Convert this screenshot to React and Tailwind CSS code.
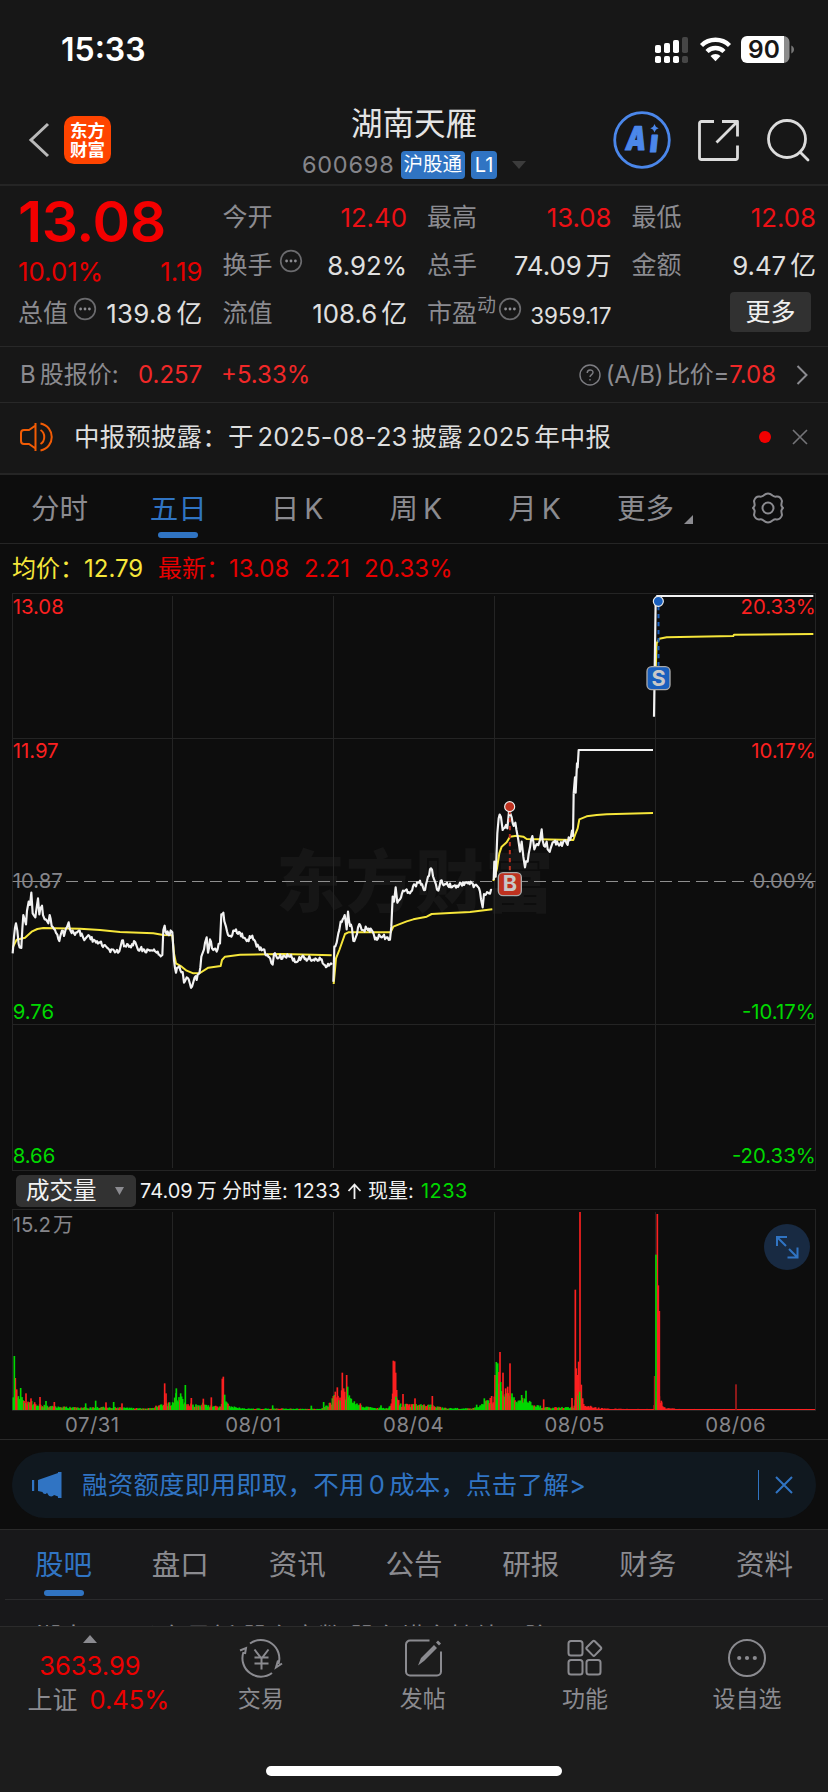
import React, { useState } from "react";

// chart coordinates are 3 units per css pixel
const PRICE_DAYS = [
  {
    amp: 9,
    points: "38,1120 42,1070 48,1030 52,1052 56,1092 64,1104 70,1005 78,1033 86,965 90,975 94,938 98,1000 106,1012 114,955 118,1003 126,977 134,1018 145,1030 149,1005 155,1038 165,1050 172,1064 178,1083 186,1052 192,1068 198,1045 206,1027 212,1053 222,1060 236,1052 250,1074 262,1069 272,1078 285,1082 300,1088 312,1096 325,1106 345,1117 358,1114 366,1082 378,1100 390,1098 406,1087 412,1104 430,1108 450,1112 470,1118 487,1125 490,1050 494,1037 500,1062 517,1057 522,1140 528,1178 535,1162 548,1176 552,1208 560,1192 570,1212 576,1220 584,1192 590,1200 598,1180 604,1130 612,1108 620,1072 624,1118 630,1078 640,1110 650,1115 660,1090 664,1003 670,998 678,1040 684,1065 694,1070 705,1053 720,1058 740,1083 757,1067 770,1100 790,1108 805,1130 818,1154 822,1122 832,1135 850,1127 870,1130 892,1145 905,1132 925,1136 950,1138 965,1138 972,1154 996,1154",
  },
  {
    amp: 9,
    points: "1000,1205 1003,1100 1010,1088 1015,1060 1022,1025 1034,1005 1040,1048 1044,995 1050,1038 1056,1045 1060,1083 1068,1070 1078,1032 1085,1050 1100,1045 1115,1050 1125,1078 1140,1068 1160,1072 1170,1079 1174,1040 1178,950 1182,965 1187,922 1192,968 1200,958 1206,940 1220,928 1230,940 1245,915 1260,902 1275,930 1284,890 1293,865 1305,905 1315,932 1322,902 1335,912 1365,916 1400,907 1425,915 1440,935 1448,982 1452,942 1464,938 1476,930",
  },
  {
    amp: 12,
    points: "1481,900 1483,845 1487,890 1492,760 1496,715 1503,712 1508,750 1518,735 1522,745 1527,695 1535,712 1541,738 1546,728 1555,780 1560,815 1565,785 1570,830 1575,862 1583,845 1590,802 1597,768 1603,808 1612,792 1620,780 1625,748 1632,798 1640,785 1646,812 1655,796 1665,782 1680,794 1690,785 1700,790 1712,775 1716,752 1719,768 1721,640",
  },
  { amp: 0, points: "1721,640 1725,592 1727,638 1731,550 1733,562 1736,510 1959,510" },
  { amp: 0, points: "1962,410 1967,62 1971,48 2440,48" },
];

const AVERAGE_DAYS = [
  "38,1103 50,1079 75,1073 95,1055 112,1047 130,1044 240,1046 300,1050 360,1056 460,1060 490,1065 517,1066 522,1120 528,1150 545,1160 560,1172 580,1180 600,1179 625,1163 662,1158 666,1140 675,1130 720,1124 850,1122 995,1126",
  "1001,1212 1008,1135 1018,1110 1035,1062 1045,1057 1172,1057 1180,1040 1195,1034 1220,1024 1240,1018 1280,1010 1295,1002 1350,999 1410,996 1477,988",
  "1480,903 1490,870 1498,820 1505,800 1520,787 1530,770 1550,767 1570,770 1580,777 1720,780 1725,765 1733,745 1738,718 1760,709 1790,705 1820,703 1959,699",
  "1965,330 1970,190 1978,176 2000,172 2200,168 2202,164 2440,162",
];

const random = (n) => {
  const v = Math.sin(n * 127.1 + 11.7) * 43758.5453;
  return v - Math.floor(v);
};

const wiggle = (text, amp) => {
  if (!amp) return text;
  const pts = text.split(" ").map((p) => p.split(",").map(Number));
  const out = [];
  pts.forEach(([x, y], i) => {
    out.push(`${x},${y}`);
    const next = pts[i + 1];
    if (!next) return;
    const steps = Math.floor((next[0] - x) / 3);
    for (let s = 1; s < steps; s++) {
      const t = s / steps;
      const noise = (random(x + s * 3) - 0.5) * amp * 1.8;
      out.push(`${x + s * 3},${(y + (next[1] - y) * t + noise).toFixed(1)}`);
    }
  });
  return out.join(" ");
};

// [x, typical height, share of red bars]
const VOLUME_LEVELS = [
  [40, 62, 0.2], [60, 50, 0.2], [75, 35, 0.4], [95, 26, 0.3], [130, 16, 0.2], [160, 13, 0.3], [210, 9, 0.3],
  [250, 8, 0.2], [330, 10, 0.2], [380, 7, 0.2], [450, 6, 0.3], [470, 14, 0.4], [515, 26, 0.4], [528, 58, 0.1],
  [545, 40, 0.1], [555, 20, 0.5], [585, 18, 0.3], [610, 22, 0.6], [635, 14, 0.5], [662, 12, 0.6], [672, 46, 0.1], [688, 14, 0.1],
  [730, 5, 0.3], [960, 4, 0.3], [985, 16, 0.6], [1005, 50, 0.7], [1025, 60, 0.6], [1045, 45, 0.3], [1065, 24, 0.1],
  [1090, 12, 0.3], [1120, 8, 0.2], [1165, 6, 0.4], [1178, 50, 0.9], [1190, 36, 0.6], [1205, 18, 0.4], [1245, 18, 0.5], [1300, 16, 0.3],
  [1330, 7, 0.1], [1410, 5, 0.2], [1450, 22, 0.2], [1480, 40, 0.5], [1490, 90, 0.4], [1510, 60, 0.5], [1530, 46, 0.3], [1555, 34, 0.1],
  [1580, 38, 0.1], [1600, 16, 0.2], [1650, 8, 0.3], [1720, 10, 0.5], [1728, 50, 0.7], [1745, 40, 0.9], [1760, 16, 1], [1790, 8, 1],
  [1830, 4, 1], [1960, 3, 1], [1972, 60, 1], [1982, 30, 1], [1996, 6, 1], [2050, 3, 1], [2446, 3, 1],
];

// [x, height, "r" | "g" | "d"]
const VOLUME_SPIKES = [
  [46, 96, "r"], [50, 62, "r"], [43, 162, "g"], [62, 66, "g"], [78, 50, "r"], [93, 35, "r"], [120, 39, "r"], [138, 27, "g"],
  [163, 24, "r"], [257, 20, "g"], [287, 28, "g"], [318, 23, "r"], [341, 24, "g"], [366, 20, "r"], [494, 80, "r"], [498, 50, "r"],
  [529, 65, "g"], [542, 50, "g"], [556, 75, "g"], [574, 36, "r"], [610, 34, "r"], [634, 38, "r"], [667, 94, "r"], [670, 100, "r"],
  [674, 46, "g"], [818, 14, "g"], [934, 13, "g"], [971, 24, "g"], [990, 22, "r"], [1006, 55, "r"], [1012, 68, "r"], [1027, 112, "r"],
  [1031, 65, "r"], [1040, 105, "r"], [1043, 70, "g"], [1081, 20, "r"], [1143, 14, "g"], [1180, 148, "r"], [1184, 146, "r"], [1187, 112, "r"],
  [1190, 60, "r"], [1188, 40, "g"], [1209, 48, "r"], [1245, 35, "r"], [1297, 42, "r"], [1430, 16, "g"], [1453, 35, "g"], [1475, 42, "r"],
  [1485, 105, "r"], [1489, 144, "g"], [1493, 140, "g"], [1497, 114, "r"], [1500, 174, "r"], [1502, 84, "g"], [1509, 112, "r"], [1517, 65, "r"],
  [1523, 70, "r"], [1530, 140, "r"], [1536, 50, "g"], [1565, 45, "g"], [1578, 58, "g"], [1631, 32, "r"], [1716, 36, "r"], [1726, 361, "r"],
  [1729, 125, "r"], [1732, 105, "r"], [1734, 44, "g"], [1736, 145, "r"], [1740, 594, "r"], [1744, 76, "r"], [1739, 55, "g"], [1568, 20, "g"],
  [1964, 102, "d"], [1972, 588, "r"], [1975, 374, "r"], [1978, 297, "r"], [1968, 466, "g"], [1984, 28, "r"], [2208, 77, "d"],
];

const volumeBars = () => {
  const bars = [];
  for (let i = 0; i < VOLUME_LEVELS.length - 1; i++) {
    const [x0, h0, red] = VOLUME_LEVELS[i];
    const [x1, h1] = VOLUME_LEVELS[i + 1];
    for (let x = x0; x < x1; x += 3) {
      const level = h0 + ((h1 - h0) * (x - x0)) / (x1 - x0);
      const h = Math.max(3, level * (0.45 + random(x) * 0.6));
      bars.push([x, h, random(x * 3.7) < red ? "r" : "g"]);
    }
  }
  return [...bars, ...VOLUME_SPIKES];
};

const BAR_COLORS = { r: "#fb2020", g: "#00d800", d: "#a81c1c" };
const GRID_X = [517.5, 1000.5, 1483.5, 1966.5];

const DotsIcon = ({ className }) => (
  <svg className={className} viewBox="0 0 24 24" width="24" height="24" fill="none" stroke="#6b6b6e" strokeWidth="1.7">
    <circle cx="12" cy="12" r="10.3" />
    <g fill="#8d8d92" stroke="none">
      <circle cx="7.6" cy="12" r="1.4" />
      <circle cx="12" cy="12" r="1.4" />
      <circle cx="16.4" cy="12" r="1.4" />
    </g>
  </svg>
);

const StatusBar = () => (
  <div className="flex h-[100px] items-center justify-between pl-[61px] pr-[33px]">
    <span className="text-[32px] font-semibold text-white">15:33</span>
    <svg width="140" height="30" viewBox="0 0 140 30" fill="#fff">
      <g>
        <rect x="0" y="10" width="6" height="8" rx="1.8" />
        <rect x="9" y="8" width="6" height="10" rx="1.8" />
        <rect x="18" y="5" width="6" height="13" rx="1.8" />
        <rect x="27" y="2" width="6" height="16" rx="1.8" fill="#464646" />
        <rect x="0" y="21" width="6" height="7" rx="1.8" />
        <rect x="9" y="21" width="6" height="7" rx="1.8" />
        <rect x="18" y="21" width="6" height="7" rx="1.8" />
        <rect x="27" y="21" width="6" height="7" rx="1.8" fill="#464646" />
      </g>
      <g fill="none" stroke="#fff" strokeWidth="4.4">
        <path d="M46.5 10.5a20 20 0 0 1 28 0" />
        <path d="M52 16.5a12.2 12.2 0 0 1 17 0" />
      </g>
      <path d="M60.5 26.3l-5-5.2a7.2 7.2 0 0 1 10 0z" />
      <path d="M127 1h1.5a6 6 0 0 1 6 6v15a6 6 0 0 1-6 6H127z" fill="#8b8b8b" />
      <path d="M92 1h37v27H92a6 6 0 0 1-6-6V7a6 6 0 0 1 6-6z" />
      <path d="M136.3 10.5c3.6 1.4 3.6 6.6 0 8z" fill="#777" />
      <text x="109" y="23" textAnchor="middle" fontSize="24.5" fontWeight="600" fill="#171717">90</text>
    </svg>
  </div>
);

const Header = () => (
  <header className="flex h-[84px] justify-between">
    <div className="flex h-20 w-[230px] items-center pl-[28px]">
      <svg width="22" height="36" viewBox="0 0 22 36" fill="none" stroke="#b9b9b9" strokeWidth="3">
        <path d="M20 2L3 18l17 16" />
      </svg>
      <div className="ml-[14px] flex h-12 w-[47px] flex-col items-center justify-center rounded-[10px] bg-[#ff4400] text-[17.5px] font-bold leading-[19px] text-white">
        <span>东方</span>
        <span>财富</span>
      </div>
    </div>
    <div className="flex flex-col items-center">
      <h1 className="mt-[5px] text-[31.5px] leading-[38px] text-[#e4e4e4]">湖南天雁</h1>
      <div className="mt-[8px] flex h-7 items-center">
        <span className="text-[23.5px] tracking-[0.8px] text-[#85858a]">600698</span>
        <span className="ml-[6px] flex h-7 items-center rounded-[4px] bg-[#3074c3] px-[3px] text-[19.5px] text-white">沪股通</span>
        <span className="ml-[6px] flex h-7 w-[26px] items-center justify-center rounded-[4px] bg-[#3074c3] text-[20px] text-white">L1</span>
        <svg className="ml-[15px]" width="14" height="8" viewBox="0 0 14 8"><path d="M0 0h14L7 8z" fill="#3c3c3c" /></svg>
      </div>
    </div>
    <div className="flex h-20 w-[230px] items-center justify-end pr-[18px]">
      <svg width="58" height="58" viewBox="0 0 58 58">
        <circle cx="29" cy="29" r="27.3" fill="none" stroke="#4b87ea" strokeWidth="2.8" />
        <g fontSize="32.5" fontWeight="900" fill="#4b87ea" stroke="#4b87ea" strokeWidth="1.2" strokeLinejoin="round">
          <text transform="translate(11.5 39) skewX(-9) scale(.78 1)">A</text>
          <text transform="translate(36 40.5) skewX(-6) scale(.85 .95)">ı</text>
        </g>
        <path d="M41.5 13c1 2.5 1.5 3.2 4.2 4.3-2.7 1-3.2 1.7-4.2 4.2-1-2.5-1.5-3.2-4.2-4.2 2.7-1.1 3.2-1.8 4.2-4.3z" fill="#4b87ea" />
      </svg>
      <svg className="ml-[26px]" width="42" height="42" viewBox="0 0 42 42" fill="none" stroke="#dcdcdc" strokeWidth="2.8">
        <path d="M17 2.5H4.5a2 2 0 0 0-2 2v34a2 2 0 0 0 2 2h34a2 2 0 0 0 2-2V26.5M25 2.5h15.5v15M40 3L19.5 23.5" strokeLinejoin="round" />
      </svg>
      <svg className="ml-[27px]" width="44" height="44" viewBox="0 0 44 44" fill="none" stroke="#dcdcdc" strokeWidth="2.8" strokeLinecap="round">
        <circle cx="21" cy="21" r="18.5" />
        <path d="M34 34l8 8" />
      </svg>
    </div>
  </header>
);

const Cell = ({ label, value, red, dots }) => (
  <div className="flex h-12 items-center justify-between">
    <span className="flex items-center text-[25px] text-[#8b8b90]">
      {label}
      {dots && <DotsIcon className="mb-[10px] ml-[6px]" />}
    </span>
    <span className={red ? "text-[25.8px] text-[#ec1015]" : "text-[25.8px] text-[#e0e0e0]"}>{value}</span>
  </div>
);

const Quote = () => (
  <section className="grid h-[162px] grid-cols-4 gap-x-5 border-t-2 border-[#252525] pl-[18px] pr-[12px] pt-2">
    <div className="-mt-px">
      <div className="flex h-14 items-center text-[57px] font-semibold leading-none tracking-[-0.4px] text-[#f30000]">13.08</div>
      <div className="flex h-[46px] items-center justify-between text-[25.8px] text-[#e60000]">
        <span>10.01%</span>
        <span>1.19</span>
      </div>
      <div className="flex h-[38px] items-center justify-between">
        <span className="flex items-center text-[25px] text-[#8b8b90]">总值<DotsIcon className="mb-[10px] ml-[5px]" /></span>
        <span className="text-[25.8px] tracking-[0.3px] text-[#e0e0e0]">139.8<span className="ml-1">亿</span></span>
      </div>
    </div>
    <div>
      <Cell label="今开" value="12.40" red />
      <Cell label="换手" value="8.92%" dots />
      <Cell label="流值" value={<>108.6<span className="ml-1">亿</span></>} />
    </div>
    <div>
      <Cell label="最高" value="13.08" red />
      <Cell label="总手" value={<>74.09<span className="ml-1">万</span></>} />
      <div className="flex h-12 items-center justify-between">
        <span className="flex items-center text-[25px] text-[#8b8b90]">
          市盈<span className="mb-[16px] text-[19px]">动</span>
          <DotsIcon className="mb-[10px] ml-[2px]" />
        </span>
        <span className="pt-1 text-[22.5px] text-[#e0e0e0]">3959.17</span>
      </div>
    </div>
    <div>
      <Cell label="最低" value="12.08" red />
      <Cell label="金额" value={<>9.47<span className="ml-1">亿</span></>} />
      <div className="flex justify-end pr-[5px] pt-[2px]">
        <button className="h-10 w-[81px] rounded-[4px] bg-[#313131] text-[25px] leading-none text-[#f0f0f0]">更多</button>
      </div>
    </div>
  </section>
);

const BShareRow = () => (
  <section className="flex h-[56px] items-center border-t border-[#282828] pl-[20px] pr-[20px] text-[24px] text-[#8b8b90]">
    <span className="w-[118px]">B<span className="ml-1">股报价:</span></span>
    <span className="w-[83px] text-[#f02828]">0.257</span>
    <span className="text-[#f02828]">+5.33%</span>
    <svg className="ml-auto" width="22" height="22" viewBox="0 0 22 22" fill="none" stroke="#7d7d82" strokeWidth="1.4">
      <circle cx="11" cy="11" r="10" />
      <path d="M8.2 9c0-4 5.800-4 5.800-.5 0 2-3 2.300-3 4.600M11 15v1.600" />
    </svg>
    <span className="ml-[5px] tracking-[-0.3px]">(A/B)<span className="ml-[3px]">比价=</span></span>
    <span className="text-[#f02828]">7.08</span>
    <svg className="ml-[20px]" width="12" height="20" viewBox="0 0 12 20" fill="none" stroke="#8b8b90" strokeWidth="2">
      <path d="M1.5 1l9 9-9 9" />
    </svg>
  </section>
);

const NewsRow = () => (
  <section className="flex h-[71px] items-center border-t border-[#282828] pb-0.5 pl-5 pr-[20px]">
    <svg width="34" height="30" viewBox="0 0 34 30" fill="none" stroke="#f25c05" strokeWidth="2">
      <path d="M15.5 1v28M15.5 3.500L9 8H4a3 3 0 0 0-3 3v8a3 3 0 0 0 3 3h5l6.500 4.500" />
      <path d="M20.5 8c5 3 5 11 0 14M20.5 1.500c15 3 15 24 0 27" />
    </svg>
    <p className="ml-[20px] whitespace-nowrap text-[25.5px] tracking-[0.15px] text-[#dedede]">
      中报预披露：于<span className="mx-1">2025-08-23</span>披露<span className="mx-1">2025</span>年中报
    </p>
    <span className="ml-auto h-3 w-3 rounded-full bg-[#f30000]" />
    <svg className="ml-[21px]" width="16" height="16" viewBox="0 0 16 16" stroke="#747478" strokeWidth="1.6">
      <path d="M1 1l14 14M15 1L1 15" />
    </svg>
  </section>
);

const ChartTabs = () => {
  const [active, setActive] = useState(1);
  const tabs = [["分时"], ["五日"], ["日", "K"], ["周", "K"], ["月", "K"]];
  return (
    <nav className="flex h-[70px] border-t-2 border-[#252525] bg-[#0d0d0d] text-[28.5px] text-[#8b8b90]">
      {tabs.map(([name, suffix], i) => (
        <button key={name} onClick={() => setActive(i)} className={i === active ? "relative w-[118.8px] text-[#3074c3]" : "relative w-[118.8px]"}>
          {name}
          {suffix && <span className="ml-[5px]">{suffix}</span>}
          {i === active && <span className="absolute bottom-[5px] left-[39px] h-[6px] w-10 rounded-[3px] bg-[#3074c3]" />}
        </button>
      ))}
      <button className="ml-[23px] flex items-center">
        更多
        <svg className="ml-[10px] mt-[20px]" width="9" height="9" viewBox="0 0 9 9"><path d="M9 0v9H0z" fill="#8b8b90" /></svg>
      </button>
      <svg className="ml-[58px] mt-[16px]" width="34" height="34" viewBox="0 0 34 34" fill="none" stroke="#8b8b90" strokeWidth="2" strokeLinejoin="round">
        <path d="M12.5 4.500Q17 .5 21.500 4.500Q23.500 6 25.500 5.600Q29.500 5.200 31 10Q30.500 12.200 30.300 14Q30.500 15.500 32 17Q30.500 18.500 30.300 20Q30.500 21.800 31 24Q29.500 28.800 25.500 28.400Q23.500 28 21.500 29.500Q17 33.500 12.500 29.500Q10.500 28 8.500 28.400Q4.500 28.800 3 24Q3.500 21.800 3.700 20Q3.500 18.500 2 17Q3.500 15.500 3.700 14Q3.500 12.200 3 10Q4.500 5.200 8.500 5.600Q10.500 6 12.500 4.500z" />
        <circle cx="17" cy="17" r="5.5" />
      </svg>
    </nav>
  );
};

const PriceChart = () => (
  <svg className="block" width="828" height="582" viewBox="0 33 2484 1746" fontSize="61">
    <text x="828" y="982" fontSize="206" fontWeight="900" letterSpacing="3" fill="#161616">东方财富</text>
    <g fill="none" stroke="#242424" strokeWidth="3">
      <rect x="37.5" y="40.5" width="2409" height="1731" />
      <path d="M37 475.5H2446M37 1333.5H2446" />
      {GRID_X.map((x) => <path key={x} d={`M${x} 48V1764`} />)}
    </g>
    <path d="M198 904.5H2446" stroke="#8f8f8f" strokeWidth="3" strokeDasharray="36 18" />
    <path d="M38 904.5H180M2250 904.5H2446" stroke="#8f8f8f" strokeWidth="3" />
    <g fill="none" stroke="#f6e63a" strokeWidth="6" strokeLinejoin="round">
      {AVERAGE_DAYS.map((points) => <polyline key={points} points={points} />)}
    </g>
    <g fill="none" stroke="#f2f2f2" strokeWidth="6.5" strokeLinejoin="round">
      {PRICE_DAYS.map(({ points, amp }) => <polyline key={points} points={wiggle(points, amp)} />)}
    </g>
    <path d="M1529.5 690V880" stroke="#bf3220" strokeWidth="6" strokeDasharray="13 11" />
    <circle cx="1529" cy="680" r="15" fill="#bf3220" stroke="#eee" strokeWidth="3.5" />
    <rect x="1495" y="878" width="69" height="69" rx="14" fill="#bf3220" stroke="#a9a9a9" strokeWidth="4" />
    <text x="1529.5" y="934" textAnchor="middle" fontWeight="700" fontSize="65" fill="#c8c8c8">B</text>
    <path d="M1975.5 78V262" stroke="#195fbd" strokeWidth="6" strokeDasharray="13 11" />
    <circle cx="1975" cy="64" r="15" fill="#195fbd" stroke="#eee" strokeWidth="3.5" />
    <rect x="1941" y="260" width="69" height="69" rx="14" fill="#195fbd" stroke="#a9a9a9" strokeWidth="4" />
    <text x="1975.5" y="318" textAnchor="middle" fontWeight="700" fontSize="65" fill="#c8c8c8">S</text>
    <g fill="#fb2020">
      <text x="38" y="102">13.08</text>
      <text x="38" y="534">11.97</text>
      <text x="2447" y="102" textAnchor="end">20.33%</text>
      <text x="2447" y="534" textAnchor="end">10.17%</text>
    </g>
    <g fill="#85858a">
      <text x="38" y="924">10.87</text>
      <text x="2447" y="924" textAnchor="end">0.00%</text>
    </g>
    <g fill="#00d800">
      <text x="38" y="1317">9.76</text>
      <text x="38" y="1749">8.66</text>
      <text x="2447" y="1317" textAnchor="end">-10.17%</text>
      <text x="2447" y="1749" textAnchor="end">-20.33%</text>
    </g>
  </svg>
);

const VolumeLegend = () => (
  <div className="flex h-[35px] items-center whitespace-nowrap pl-4 text-[20px] text-[#f2f2f2]">
    <button className="flex h-8 w-[120px] items-center justify-between rounded-[5px] bg-[#323232] pl-[10px] pr-[12px] text-[23.5px]">
      成交量
      <svg width="9" height="8" viewBox="0 0 9 8"><path d="M0 0h9L4.500 8z" fill="#8b8b90" /></svg>
    </button>
    <span className="ml-1 w-[82px]">74.09<span className="ml-1">万</span></span>
    <span className="w-[72px]">分时量:</span>
    <span className="w-[53px] tracking-[0.4px]">1233</span>
    <svg width="15" height="16" viewBox="0 0 15 16" fill="none" stroke="#f2f2f2" strokeWidth="1.8">
      <path d="M7.5 16V2M1.500 8l6-6.500 6 6.500" />
    </svg>
    <span className="ml-[6px] w-[53px]">现量:</span>
    <span className="tracking-[0.4px] text-[#00d800]">1233</span>
  </div>
);

const VolumeChart = () => (
  <div className="relative h-[231px]">
    <svg className="block" width="828" height="231" viewBox="0 144 2484 693" fontSize="61">
      <g fill="none" stroke="#242424" strokeWidth="3">
        <rect x="37.5" y="148.5" width="2409" height="603" />
        {GRID_X.map((x) => <path key={x} d={`M${x} 156V750`} />)}
      </g>
      {volumeBars().map(([x, h, c], i) => (
        <rect key={i} x={x - 2.5} y={750 - h} width="5" height={h} fill={BAR_COLORS[c]} />
      ))}
      <g fill="#85858a">
        <text x="38" y="216">15.2<tspan dx="6">万</tspan></text>
        <g textAnchor="middle" letterSpacing="1.5">
          <text x="277" y="816">07/31</text>
          <text x="760" y="816">08/01</text>
          <text x="1241" y="816">08/04</text>
          <text x="1724" y="816">08/05</text>
          <text x="2207" y="816">08/06</text>
        </g>
      </g>
    </svg>
    <button className="absolute right-[18px] top-4 flex h-[46px] w-[46px] items-center justify-center rounded-full bg-[#182a42]">
      <svg width="24" height="24" viewBox="0 0 24 24" fill="none" stroke="#3074c3" strokeWidth="2">
        <path d="M2 11V2h10M2.500 2.500l8.500 8.500M14 14l8 8M22.500 12.500V22.500H12.500" />
      </svg>
    </button>
  </div>
);

const Banner = () => (
  <section className="border-t border-[#2a2a2a] px-3 pb-[11px] pt-3">
    <div className="flex h-[66px] items-center rounded-full bg-[#10181f] pl-5 pr-[23px] text-[25.5px] text-[#3074c3]">
      <svg width="31" height="28" viewBox="0 0 31 28" fill="#3074c3">
        <path d="M0 9h2.200v11H0zM6 9l20-7V1h3.500v26H26v-1.500l-4-1.500c-1 2-5 2-6-.5l-1-1.800c-1 2-4 1.500-4.500-.7L6 20z" />
      </svg>
      <span className="ml-[19px] whitespace-nowrap tracking-[0.2px]">融资额度即用即取，不用<span className="mx-1">0</span>成本，点击了解&gt;</span>
      <span className="ml-auto h-[30px] w-px bg-[#3074c3]" />
      <svg className="ml-4" width="18" height="18" viewBox="0 0 18 18" stroke="#3074c3" strokeWidth="2">
        <path d="M1 1l16 16M17 1L1 17" />
      </svg>
    </div>
  </section>
);

const SectionTabs = () => {
  const [active, setActive] = useState(0);
  const tabs = ["股吧", "盘口", "资讯", "公告", "研报", "财务", "资料"];
  return (
    <section className="h-[97px] border-t border-[#2a2a2a] bg-[#18181a]">
      <nav className="mx-[5px] flex h-[70px] border-b border-[#2a2a2c] text-[28.5px] text-[#8b8b90]">
        {tabs.map((name, i) => (
          <button key={name} onClick={() => setActive(i)} className={i === active ? "relative flex-1 pt-0.5 text-[#3074c3]" : "relative flex-1 pt-0.5"}>
            {name}
            {i === active && <span className="absolute bottom-[3px] left-[39px] h-[6px] w-10 rounded-[3px] bg-[#3074c3]" />}
          </button>
        ))}
      </nav>
      <div className="h-[26px] overflow-hidden pl-9 pt-[18px]">
        <p className="whitespace-nowrap text-[25px] leading-[38px] text-[#8b8b90]">湖南天雁公布最新 股东户数 股东横向持续下降</p>
      </div>
    </section>
  );
};

const NavItem = ({ label, children }) => (
  <button className="flex w-[162.3px] flex-col items-center">
    <svg className="mt-[9px]" width="44" height="44" viewBox="0 0 44 44" fill="none" stroke="#8b8b90" strokeWidth="2">{children}</svg>
    <span className="mt-[6px] text-[23px] leading-[26px] text-[#8b8b90]">{label}</span>
  </button>
);

const BottomNav = () => (
  <footer className="flex h-[166px] flex-col border-t border-[#2b2b2b] bg-[#1c1c1c]">
    <div className="flex">
      <div className="flex w-[180px] flex-col items-center pt-2">
        <svg width="14" height="8" viewBox="0 0 14 8"><path d="M7 0l7 8H0z" fill="#8b8b90" /></svg>
        <span className="mt-[6px] text-[25.5px] leading-[34px] text-[#ec0000]">3633.99</span>
        <div className="flex w-full justify-center pl-[17px] text-[25.5px] leading-[34px] text-[#ec0000]">
          <span className="mr-3 text-[25px] text-[#8b8b90]">上证</span>0.45%
        </div>
      </div>
      <NavItem label="交易">
        <path d="M11 7.500A18.500 18.500 0 0 1 39.500 28M33 37A18.500 18.500 0 0 1 4.500 16M1 14.500l6-2.500-1 6M43 27.500l-6 4 2-7M15.500 13.500l7 9 7-9M22.500 22.500v11M15.500 21.500h14M15.500 27.500h14" />
      </NavItem>
      <NavItem label="发帖">
        <path d="M28.5 4.500H9a4 4 0 0 0-4 4v27a4 4 0 0 0 4 4h27a4 4 0 0 0 4-4V15.500" />
        <path d="M17 29.500l3-7.500L33 9l3 3-13 13zM35 6.500l2-2 3 3-2 2z" fill="#8b8b90" stroke="none" />
      </NavItem>
      <NavItem label="功能">
        <rect x="5.5" y="5" width="14" height="14.5" rx="2.5" />
        <rect x="5.5" y="24" width="14" height="14.5" rx="2.5" />
        <rect x="23.5" y="24" width="14" height="14.5" rx="2.5" />
        <path d="M29.8 5.200q1-1 2 0l6 6.100q1 1 0 2l-6 6.100q-1 1-2 0l-6-6.100q-1-1 0-2z" />
      </NavItem>
      <NavItem label="设自选">
        <circle cx="22" cy="22" r="18" />
        <g fill="#8b8b90" stroke="none">
          <circle cx="14.2" cy="22" r="2.1" />
          <circle cx="22" cy="22" r="2.1" />
          <circle cx="29.8" cy="22" r="2.1" />
        </g>
      </NavItem>
    </div>
    <span className="mx-auto mb-4 mt-auto h-[10px] w-[296px] rounded-full bg-white" />
  </footer>
);

export default function App() {
  return (
    <div className="flex h-[1792px] w-[828px] flex-col overflow-hidden bg-[#171717] font-['Inter','Noto_Sans_CJK_SC',sans-serif]">
      <StatusBar />
      <Header />
      <Quote />
      <BShareRow />
      <NewsRow />
      <ChartTabs />
      <main className="bg-[#0d0d0d]">
        <div className="flex h-[48px] items-center whitespace-nowrap border-t border-[#252525] pl-3 pt-0.5 text-[24px] text-[#e60000]">
          <span className="w-[72px] text-[#f6e63a]">均价：</span>
          <span className="w-[74px] text-[#f6e63a]">12.79</span>
          <span className="w-[71px]">最新：</span>
          <span className="w-[75px]">13.08</span>
          <span className="w-[60px]">2.21</span>
          <span>20.33%</span>
        </div>
        <PriceChart />
        <VolumeLegend />
        <VolumeChart />
        <Banner />
      </main>
      <SectionTabs />
      <BottomNav />
    </div>
  );
}
